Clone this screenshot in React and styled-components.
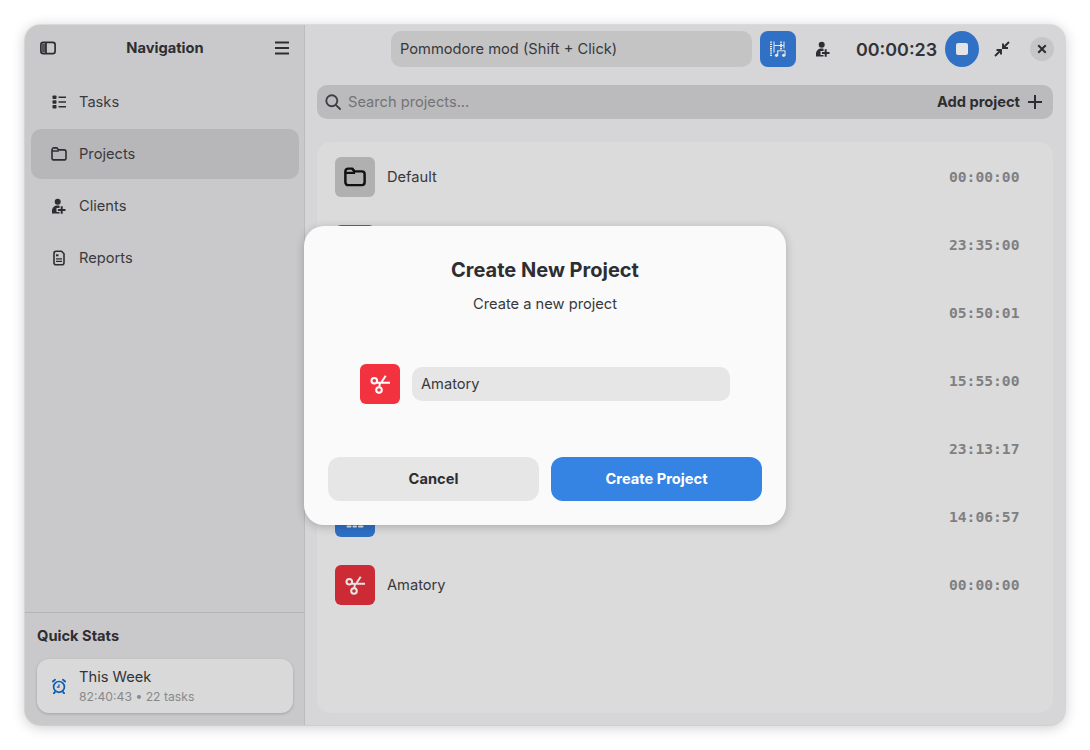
import React from "react";
import styled, { createGlobalStyle } from "styled-components";

const GlobalStyle = createGlobalStyle`
  html, body {
    margin: 0;
    padding: 0;
    background: #ffffff;
    font-family: "Inter", "Liberation Sans", sans-serif;
    font-size: 11pt;
    color: #2e2e32;
  }
  * {
    box-sizing: border-box;
  }
`;

const Page = styled.div`
  width: 1090px;
  height: 750px;
  padding: 25px;
  position: relative;
  overflow: hidden;
`;

const Window = styled.div`
  width: 1040px;
  height: 700px;
  display: flex;
  border-radius: 15px;
  overflow: hidden;
  background: #d6d6d8;
  box-shadow: 0 0 0 1px rgba(0, 0, 0, 0.07), 0 2px 14px rgba(0, 0, 0, 0.22);
`;

const Sidebar = styled.aside`
  width: 280px;
  flex-shrink: 0;
  display: flex;
  flex-direction: column;
  background: #c9c9cb;
  border-right: 1px solid #bcbcbe;
`;

const SideHeader = styled.div`
  height: 46px;
  display: flex;
  align-items: center;
  justify-content: space-between;
  padding: 0 14px 0 15px;
`;

const SideTitle = styled.div`
  font-weight: 700;
  color: #2e2e32;
`;

const Nav = styled.nav`
  flex: 1;
  display: flex;
  flex-direction: column;
  gap: 2px;
  padding: 6px 5px 0 6px;
`;

const NavItem = styled.div`
  height: 50px;
  display: flex;
  align-items: center;
  gap: 12px;
  padding: 0 20px 1px;
  border-radius: 10px;
  color: #3a3a3e;
  background: ${(props) => (props.$active ? "#b7b7b9" : "transparent")};
`;

const Stats = styled.div`
  height: 113px;
  border-top: 1px solid #b5b5b7;
  padding: 14px 11px 0 12px;
`;

const StatsTitle = styled.div`
  font-weight: 700;
  line-height: 18px;
  color: #2e2e32;
  margin-bottom: 14px;
`;

const StatCard = styled.div`
  height: 54px;
  display: flex;
  align-items: center;
  gap: 12px;
  padding: 0 14px;
  border-radius: 12px;
  background: #d9d9da;
  box-shadow: 0 1px 3px rgba(0, 0, 0, 0.2);
`;

const StatText = styled.div`
  padding-top: 2px;
`;

const StatName = styled.div`
  line-height: 18px;
  color: #333337;
`;

const StatMeta = styled.div`
  font-size: 12.2px;
  line-height: 18px;
  margin-top: 2px;
  color: #88888a;
`;

const Main = styled.main`
  flex: 1;
  display: flex;
  flex-direction: column;
  padding: 0 12px;
  min-width: 0;
`;

const TopBar = styled.div`
  height: 48px;
  margin: 0 -1px 12px 0;
  display: flex;
  align-items: center;
  padding-left: 74px;
`;

const ModeBox = styled.div`
  width: 361px;
  height: 36px;
  display: flex;
  align-items: center;
  padding: 0 9px 1px;
  border-radius: 10px;
  background: #c4c4c5;
  color: #38383c;
`;

const BlueSquare = styled.div`
  width: 36px;
  height: 36px;
  margin-left: 8px;
  border-radius: 8px;
  background: #3071c6;
  display: flex;
  align-items: center;
  justify-content: center;
`;

const ClientSlot = styled.div`
  width: 54px;
  display: flex;
  justify-content: center;
`;

const Timer = styled.div`
  margin-left: 6px;
  width: 83px;
  font-size: 17.9px;
  font-weight: 600;
  color: #333337;
`;

const StopButton = styled.div`
  width: 34px;
  height: 36px;
  margin-left: 6px;
  border-radius: 50%;
  background: #3071c6;
  display: flex;
  align-items: center;
  justify-content: center;
`;

const StopSquare = styled.div`
  width: 12px;
  height: 12px;
  border-radius: 2px;
  background: #e4e4e6;
`;

const ShrinkSlot = styled.div`
  width: 46px;
  display: flex;
  justify-content: center;
`;

const CloseButton = styled.div`
  width: 24px;
  height: 24px;
  margin-left: 5px;
  flex-shrink: 0;
  border-radius: 50%;
  background: #c6c6c8;
  display: flex;
  align-items: center;
  justify-content: center;
`;

const SearchBar = styled.div`
  height: 34px;
  display: flex;
  align-items: center;
  padding: 0 10px 0 8px;
  border-radius: 10px;
  background: #bbbbbd;
`;

const SearchText = styled.div`
  flex: 1;
  margin-left: 7px;
  padding-bottom: 1px;
  color: #737376;
`;

const AddLabel = styled.div`
  font-weight: 700;
  padding-bottom: 1px;
  color: #2e2e32;
  margin-right: 7px;
`;

const ListCard = styled.div`
  margin-top: 23px;
  height: 571px;
  padding: 15px 18px;
  display: flex;
  flex-direction: column;
  gap: 28px;
  border-radius: 14px;
  background: #dbdbdc;
`;

const Row = styled.div`
  height: 40px;
  display: flex;
  align-items: center;
  gap: 12px;
`;

const IconTile = styled.div`
  width: 40px;
  height: 40px;
  border-radius: 6px;
  background: ${(props) => props.$bg};
  display: flex;
  align-items: center;
  justify-content: center;
  flex-shrink: 0;
`;

const RowName = styled.div`
  flex: 1;
  padding-bottom: 1px;
  color: #38383c;
`;

const RowTime = styled.div`
  font-family: "DejaVu Sans Mono", monospace;
  font-weight: 700;
  color: #808082;
  margin-right: 15.5px;
  padding-bottom: 2px;
`;

const Dialog = styled.div`
  position: absolute;
  left: 304px;
  top: 226px;
  width: 482px;
  height: 299px;
  padding: 32px 24px 24px;
  display: flex;
  flex-direction: column;
  align-items: center;
  border-radius: 20px;
  background: #fafafa;
  box-shadow: 0 2px 10px rgba(0, 0, 0, 0.22);
`;

const DialogTitle = styled.div`
  font-size: 20px;
  line-height: 24px;
  font-weight: 700;
  color: #2e2e32;
`;

const DialogSub = styled.div`
  margin-top: 13px;
  line-height: 18px;
  color: #38383c;
`;

const FieldRow = styled.div`
  margin-top: 51px;
  display: flex;
  align-items: center;
  gap: 12px;
`;

const NameField = styled.div`
  width: 318px;
  height: 34px;
  padding: 0 9px;
  display: flex;
  align-items: center;
  border-radius: 10px;
  background: #e6e6e6;
  color: #38383c;
`;

const DialogActions = styled.div`
  margin-top: auto;
  width: 100%;
  display: flex;
  gap: 12px;
`;

const DialogButton = styled.div`
  flex: 1;
  height: 44px;
  padding-bottom: 1px;
  display: flex;
  align-items: center;
  justify-content: center;
  border-radius: 12px;
  font-weight: 700;
  background: ${(props) => (props.$primary ? "#3584e4" : "#e6e6e6")};
  color: ${(props) => (props.$primary ? "#ffffff" : "#2e2e32")};
`;

const Glyph = ({ size = 16, box = 16, children, color = "#2e2e32", weight = 1.6 }) => (
  <svg
    width={size}
    height={size}
    viewBox={`0 0 ${box} ${box}`}
    fill="none"
    stroke={color}
    strokeWidth={weight}
    strokeLinecap="round"
    strokeLinejoin="round"
    style={{ flexShrink: 0 }}
  >
    {children}
  </svg>
);

const PanelIcon = () => (
  <Glyph weight={1.7}>
    <rect x="0.9" y="2.4" width="14.2" height="11.2" rx="2.4" />
    <path d="M2 3.4h4v9.2H2z" fill="#55555a" stroke="none" />
    <path d="M6 3v10" strokeLinecap="butt" />
  </Glyph>
);

const MenuIcon = () => (
  <Glyph weight={1.9}>
    <path d="M1 2.5h14M1 8h14M1 13.5h14" strokeLinecap="butt" />
  </Glyph>
);

const TasksIcon = () => (
  <Glyph>
    <rect x="1.5" y="1.5" width="4" height="3.6" rx=".8" fill="#2e2e32" stroke="none" />
    <rect x="1.5" y="6.2" width="4" height="3.6" rx=".8" fill="#2e2e32" stroke="none" />
    <rect x="1.5" y="10.9" width="4" height="3.6" rx=".8" fill="#2e2e32" stroke="none" />
    <path d="M7.5 3.2H15M7.5 8H15M7.5 12.8H15" strokeLinecap="butt" />
  </Glyph>
);

const FolderIcon = ({ size = 16, color = "#2e2e32", weight = 1.6 }) => (
  <Glyph size={size} color={color} weight={weight}>
    <path d="M3 1.9h3l1.6 2H13a2 2 0 0 1 2 2v6a2 2 0 0 1-2 2H3a2 2 0 0 1-2-2V3.9a2 2 0 0 1 2-2z" />
    <path d="M1.5 5h5.8" />
  </Glyph>
);

const ClientIcon = () => (
  <Glyph weight={2}>
    <circle cx="6.7" cy="3.7" r="3" fill="#2e2e32" stroke="none" />
    <path
      d="M1 15.5V13C1 9.5 3.5 7.5 6.7 7.5c.7 0 1.3.1 1.8.2V10H5.5v4h3v1.5z"
      fill="#2e2e32"
      stroke="none"
    />
    <path d="M10.7 8.2v7.6M6.9 12h7.6" strokeLinecap="butt" />
  </Glyph>
);

const ReportIcon = () => (
  <Glyph>
    <path d="M5 1.3h5.5L13 3.8v8.9a2 2 0 0 1-2 2H5a2 2 0 0 1-2-2V3.3a2 2 0 0 1 2-2z" />
    <rect x="5" y="4.3" width="2.5" height="2" fill="#2e2e32" stroke="none" />
    <path d="M5 8.8h6M5 11.3h6" strokeWidth="1.2" strokeLinecap="butt" />
  </Glyph>
);

const AlarmIcon = () => (
  <Glyph color="#0e5cb5" weight={1.7}>
    <circle cx="8" cy="8.9" r="5.4" />
    <path d="M8 6.2v3H5.8" strokeWidth="1.2" strokeLinecap="butt" />
    <path d="M1.9 3.4 4 1.8M14.1 3.4 12 1.8M3.9 14l-1 1.3M12.1 14l1 1.3" strokeWidth="1.9" />
  </Glyph>
);

const FilmMusicIcon = () => (
  <Glyph color="#e4e4e6" weight={1.1}>
    <path d="M1 .5v15.5M11 .5v8" strokeWidth="2" strokeDasharray="1.3 .9" strokeLinecap="butt" />
    <path d="M4 .5v11M14 .5v7M4 4.5h10" strokeLinecap="butt" />
    <path d="M7.7 14.5V9.8h7.3v4.7" strokeLinecap="butt" />
    <circle cx="6.5" cy="14.3" r="1.6" fill="#e4e4e6" stroke="none" />
    <circle cx="13.7" cy="14.3" r="1.6" fill="#e4e4e6" stroke="none" />
  </Glyph>
);

const ShrinkIcon = () => (
  <Glyph weight={1.9}>
    <path d="M15 1 9 7M9 2.5V7h5M1 15l6-6M7 13.5V9H2.5" strokeLinecap="butt" strokeLinejoin="miter" />
  </Glyph>
);

const CloseIcon = () => (
  <Glyph size={12} weight={2.8}>
    <path d="M3 3l10 10M13 3 3 13" strokeLinecap="butt" />
  </Glyph>
);

const SearchIcon = () => (
  <Glyph color="#3f3f43" weight={1.9}>
    <circle cx="6.8" cy="6.8" r="5.5" />
    <path d="M10.8 10.8l4.2 4.2" />
  </Glyph>
);

const PlusIcon = () => (
  <Glyph weight={2}>
    <path d="M8 1v14M1 8h14" strokeLinecap="butt" />
  </Glyph>
);

const ScissorsIcon = ({ color }) => (
  <Glyph size={22} box={22} color={color} weight={2}>
    <circle cx="5.3" cy="7.7" r="2.8" />
    <circle cx="10" cy="17" r="2.8" />
    <path d="M8 9.7h13M12.7 8.7l4-6M10.3 14.2l.7-4.5" strokeLinecap="butt" />
  </Glyph>
);

const BlueTileIcon = () => (
  <Glyph size={22} box={22} color="#dfe6f2" weight={2}>
    <path d="M3.5 20.5h3M9.5 20.5h2.5M15 20.5h3.5" />
  </Glyph>
);

const navItems = [
  { label: "Tasks", icon: <TasksIcon /> },
  { label: "Projects", icon: <FolderIcon />, active: true },
  { label: "Clients", icon: <ClientIcon /> },
  { label: "Reports", icon: <ReportIcon /> },
];

const projects = [
  { name: "Default", time: "00:00:00", bg: "#b0b0b1", icon: <FolderIcon size={22} color="#111111" weight={1.8} /> },
  { name: "", time: "23:35:00", bg: "#1f8a5b" },
  { name: "", time: "05:50:01", bg: "#b0b0b1" },
  { name: "", time: "15:55:00", bg: "#b0b0b1" },
  { name: "", time: "23:13:17", bg: "#b0b0b1" },
  { name: "", time: "14:06:57", bg: "#2f70c5", icon: <BlueTileIcon /> },
  { name: "Amatory", time: "00:00:00", bg: "#cc2a34", icon: <ScissorsIcon color="#e6e6e6" /> },
];

const App = () => {
  return (
    <Page>
      <GlobalStyle />
      <Window>
        <Sidebar>
          <SideHeader>
            <PanelIcon />
            <SideTitle>Navigation</SideTitle>
            <MenuIcon />
          </SideHeader>
          <Nav>
            {navItems.map((item) => (
              <NavItem key={item.label} $active={item.active}>
                {item.icon}
                {item.label}
              </NavItem>
            ))}
          </Nav>
          <Stats>
            <StatsTitle>Quick Stats</StatsTitle>
            <StatCard>
              <AlarmIcon />
              <StatText>
                <StatName>This Week</StatName>
                <StatMeta>82:40:43 • 22 tasks</StatMeta>
              </StatText>
            </StatCard>
          </Stats>
        </Sidebar>
        <Main>
          <TopBar>
            <ModeBox>Pommodore mod (Shift + Click)</ModeBox>
            <BlueSquare>
              <FilmMusicIcon />
            </BlueSquare>
            <ClientSlot>
              <ClientIcon />
            </ClientSlot>
            <Timer>00:00:23</Timer>
            <StopButton>
              <StopSquare />
            </StopButton>
            <ShrinkSlot>
              <ShrinkIcon />
            </ShrinkSlot>
            <CloseButton>
              <CloseIcon />
            </CloseButton>
          </TopBar>
          <SearchBar>
            <SearchIcon />
            <SearchText>Search projects...</SearchText>
            <AddLabel>Add project</AddLabel>
            <PlusIcon />
          </SearchBar>
          <ListCard>
            {projects.map((project) => (
              <Row key={project.time + project.name}>
                <IconTile $bg={project.bg}>{project.icon}</IconTile>
                <RowName>{project.name}</RowName>
                <RowTime>{project.time}</RowTime>
              </Row>
            ))}
          </ListCard>
        </Main>
      </Window>
      <Dialog>
        <DialogTitle>Create New Project</DialogTitle>
        <DialogSub>Create a new project</DialogSub>
        <FieldRow>
          <IconTile $bg="#f2323f">
            <ScissorsIcon color="#ffffff" />
          </IconTile>
          <NameField>Amatory</NameField>
        </FieldRow>
        <DialogActions>
          <DialogButton>Cancel</DialogButton>
          <DialogButton $primary>Create Project</DialogButton>
        </DialogActions>
      </Dialog>
    </Page>
  );
};

export default App;
